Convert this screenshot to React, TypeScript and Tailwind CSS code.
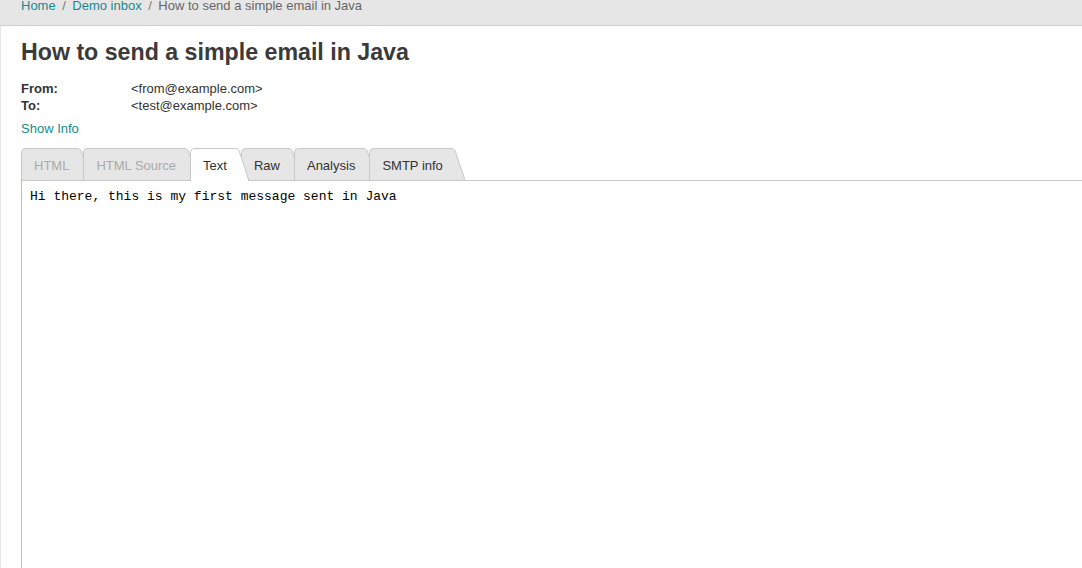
import React from "react";

const tabs = [
  { label: "HTML", state: "disabled", z: "z-[1]" },
  { label: "HTML Source", state: "disabled", z: "z-[2]" },
  { label: "Text", state: "active", z: "z-[20]" },
  { label: "Raw", state: "normal", z: "z-[4]" },
  { label: "Analysis", state: "normal", z: "z-[5]" },
  { label: "SMTP info", state: "normal", z: "z-[6]" },
];

function Tab({ label, state, z }: { label: string; state: string; z: string }) {
  const active = state === "active";
  const fill = active ? "#ffffff" : "#e6e6e6";
  const h = active ? 33 : 32;
  return (
    <div className={`relative flex ${z} ${active ? "h-[33px]" : "h-[32px]"} mr-[-8px]`}>
      <div
        className={`flex items-start pl-[12px] pr-[8px] border-l border-t border-[#c8c8c8] rounded-tl-[5px] text-[13px] leading-[15px] ${
          active ? "bg-white text-[#333]" : state === "disabled" ? "bg-[#e6e6e6] text-[#aaaaaa]" : "bg-[#e6e6e6] text-[#333]"
        }`}
      >
        <span className="pt-[9px]">{label}</span>
      </div>
      <svg width="14" height={h} viewBox={`0 0 14 ${h}`} className="block shrink-0">
        <path d={`M0 0.5 Q3 0.5 4 2.5 L14 ${h} L0 ${h} Z`} fill={fill} />
        <path d={`M0 0.5 Q3 0.5 4 2.5 L14 ${h}`} fill="none" stroke="#c8c8c8" strokeWidth="1" />
      </svg>
    </div>
  );
}

export default function App() {
  return (
    <div className="h-screen w-full flex flex-col bg-white overflow-hidden" style={{ fontFamily: '"Liberation Sans", Arial, sans-serif' }}>
      <div className="h-[26px] shrink-0 bg-[#e6e6e6] border-b border-[#cfcfcf] pl-[21px] overflow-hidden">
        <div className="-mt-[3px] leading-[18px] text-[13px] flex">
          <span className="text-[#178a8e]">Home</span>
          <span className="px-[6.5px] text-[#777]">/</span>
          <span className="text-[#178a8e]">Demo inbox</span>
          <span className="px-[6.5px] text-[#777]">/</span>
          <span className="text-[#666]">How to send a simple email in Java</span>
        </div>
      </div>
      <div className="flex-1 flex flex-col border-l border-[#e6e6e6] pl-[20px] min-h-0">
        <h1 className="mt-[12px] text-[23.2px] leading-[28px] font-bold text-[#3a3a3a]">How to send a simple email in Java</h1>
        <div className="mt-[14px] text-[13px] leading-[17px] text-[#333]">
          <div className="flex">
            <span className="w-[110px] font-bold">From:</span>
            <span>&lt;from@example.com&gt;</span>
          </div>
          <div className="flex">
            <span className="w-[110px] font-bold">To:</span>
            <span>&lt;test@example.com&gt;</span>
          </div>
        </div>
        <div className="mt-[6px] text-[13px] leading-[17px] text-[#178a8e]">Show Info</div>
        <div className="mt-[11px] flex items-start h-[32px] relative z-10">
          {tabs.map((t) => (
            <Tab key={t.label} {...t} />
          ))}
        </div>
        <div className="flex-1 border-l border-t border-l-[#bdbdbd] border-t-[#c8c8c8] bg-white pl-[8px] pt-[8px]">
          <pre className="text-[13px] leading-[15px] text-black" style={{ fontFamily: '"Liberation Mono", "Courier New", monospace' }}>
            Hi there, this is my first message sent in Java
          </pre>
        </div>
      </div>
    </div>
  );
}
